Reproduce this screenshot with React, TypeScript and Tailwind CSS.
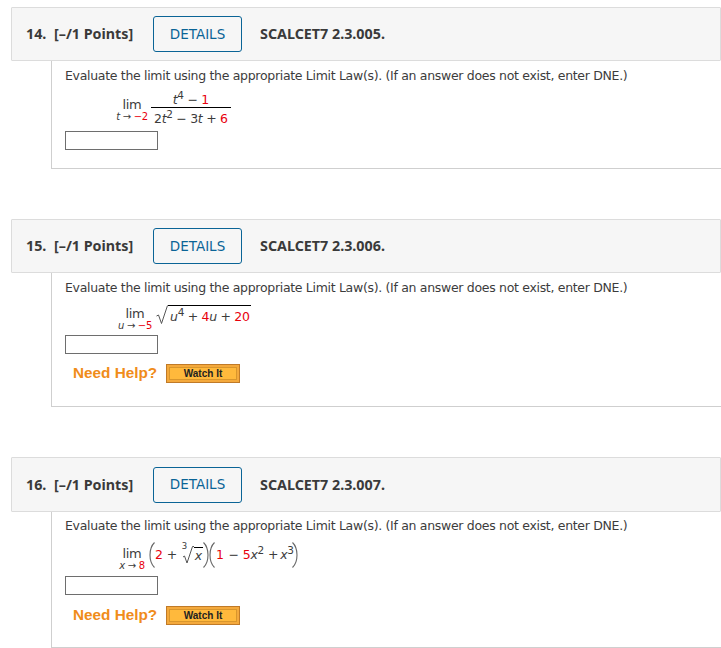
import React from "react";

const R = ({ children }: { children: React.ReactNode }) => <span className="text-[#e8000d]">{children}</span>;
const I = ({ children }: { children: React.ReactNode }) => <span className="italic">{children}</span>;
const Sup = ({ children }: { children: React.ReactNode }) => <span className="text-[10.5px] leading-none relative -top-[5px]">{children}</span>;

function Lim({ v, to, neg, w }: { v: string; to: string; neg?: boolean; w: string }) {
  return (
    <div className={`flex flex-col items-center shrink-0 ${w}`}>
      <span className="text-[13px] leading-[13px]">lim</span>
      <span className="text-[10px] leading-[11px] whitespace-nowrap">
        <I>{v}</I> → <R>{neg ? "−" : ""}{to}</R>
      </span>
    </div>
  );
}

function Paren({ flip }: { flip?: boolean }) {
  return (
    <svg width="6" height="26" viewBox="0 0 6 26" className={`shrink-0 ${flip ? "-scale-x-100" : ""}`}>
      <path d="M5.5 0.5 C1.4 4.5 1 9 1 13 C1 17 1.4 21.5 5.5 25.5" fill="none" stroke="#666" strokeWidth="1.1" />
    </svg>
  );
}

function Help({ mt }: { mt: string }) {
  return (
    <div className={`flex items-center ${mt} ml-[8px] h-[19px]`}>
      <span className="text-[#f08c1a] font-bold text-[15.3px] font-['Liberation_Sans',sans-serif] w-[93px] whitespace-nowrap">Need Help?</span>
      <div className="w-[74px] h-[19px] border border-[#c07a28] bg-[#f4a93c] p-[2px] flex">
        <div className="flex-1 bg-[#ffb93c] border border-[#d9962c] flex items-center justify-center text-[10px] font-bold text-[#222] font-['Liberation_Sans',sans-serif]">Watch It</div>
      </div>
    </div>
  );
}

function Q({ n, code, hdrH, pt, bodyH, mb, math, helpMt, mathH }: { n: number; code: string; hdrH: string; pt: string; bodyH: string; mb: string; math: React.ReactNode; helpMt?: string; mathH: string }) {
  return (
    <section className={mb}>
      <header className={`${hdrH} bg-[#f6f6f6] border border-[#dcdcdc] rounded-[1px] flex items-center text-[#3a3a3a] font-bold text-[14.3px] font-['Noto_Sans',sans-serif]`}>
        <span className="ml-[14px] w-[28px]">{n}.</span>
        <span className="w-[99px] whitespace-nowrap">[–/1 Points]</span>
        <button className="w-[89px] h-[36px] border border-[#0a6496] rounded-[3px] text-[#0a6496] font-normal text-[13.5px] font-['DejaVu_Sans',sans-serif]">DETAILS</button>
        <span className="ml-[18px] whitespace-nowrap">{code}</span>
      </header>
      <div className={`${bodyH} ${pt} ml-[40px] border-l border-b border-[#cfcfcf] pl-[13px] text-[#3c3c3c]`}>
        <p className="text-[12.5px] tracking-[-0.31px] leading-[16px] whitespace-nowrap">Evaluate the limit using the appropriate Limit Law(s). (If an answer does not exist, enter DNE.)</p>
        <div className={`${mathH} flex items-center text-[12.5px] tracking-[-0.3px] whitespace-nowrap`}>{math}</div>
        <div className="w-[93px] h-[19px] border border-[#6e6e6e] bg-white" />
        {helpMt && <Help mt={helpMt} />}
      </div>
    </section>
  );
}

export default function App() {
  return (
    <div className="pl-[11px] pt-[7px] w-[721px] h-[648px] overflow-hidden bg-white font-['DejaVu_Sans',sans-serif]">
      <Q n={14} code="SCALCET7 2.3.005." hdrH="h-[54px]" pt="pt-[7px]" bodyH="h-[108px]" mb="mb-[50px]" mathH="h-[47px]"
        math={<>
          <div className="ml-[49px] mt-[5px]"><Lim v="t" to="2" neg w="w-[36px]" /></div>
          <div className="flex flex-col items-center ml-[1px] mt-[1px]">
            <span className="h-[17px] leading-[20px]"><I>t</I><Sup>4</Sup> − <R>1</R></span>
            <span className="border-t border-black h-[20px] leading-[21px] px-[3px]">2<I>t</I><Sup>2</Sup> − 3<I>t</I> + <R>6</R></span>
          </div>
        </>} />
      <Q n={15} code="SCALCET7 2.3.006." hdrH="h-[54px]" pt="pt-[7px]" bodyH="h-[134px]" mb="mb-[50px]" mathH="h-[39px]" helpMt="mt-[10px]"
        math={<>
          <div className="ml-[52px] mt-[7px]"><Lim v="u" to="5" neg w="w-[36px]" /></div>
          <svg width="12" height="20" viewBox="0 0 12 20" className="ml-[3px] -mt-[2px] shrink-0"><path d="M0.5 11 L2.5 10 L5.5 18.5 L11.5 0.5" fill="none" stroke="#555" strokeWidth="1" /></svg>
          <span className="border-t border-black leading-[22px] h-[20px] pl-[2px] pr-[1px] -mt-[2px]"><I>u</I><Sup>4</Sup> + <R>4</R><I>u</I> + <R>20</R></span>
        </>} />
      <Q n={16} code="SCALCET7 2.3.007." hdrH="h-[55px]" pt="pt-[6px]" bodyH="h-[136px]" mb="" mathH="h-[42px]" helpMt="mt-[11px]"
        math={<>
          <div className="ml-[53px] mt-[7px]"><Lim v="x" to="8" w="w-[28px]" /></div>
          <span className="ml-[3px]"><Paren /></span>
          <R>2</R><span className="mx-[4px]">+</span>
          <span className="relative inline-flex pl-[12px] ml-[1px]">
            <span className="absolute left-[0px] -top-[5px] text-[8.5px] leading-none">3</span>
            <svg width="12" height="18" viewBox="0 0 12 18" className="absolute left-0 -top-[1px]"><path d="M1 11 L2.5 10 L5 17 L10.5 0.5 L12 0.5" fill="none" stroke="#555" strokeWidth="1" /></svg>
            <span className="border-t border-black leading-[15px] h-[16px] px-[1px]"><I>x</I></span>
          </span>
          <Paren flip /><Paren />
          <span className="ml-[1px]"><R>1</R></span><span className="ml-[5px] mr-[4px]">−</span><R>5</R><I>x</I><Sup>2</Sup><span className="ml-[4px] mr-[2px]">+</span><I>x</I><Sup>3</Sup>
          <span className="-ml-[2px]"><Paren flip /></span>
        </>} />
    </div>
  );
}
